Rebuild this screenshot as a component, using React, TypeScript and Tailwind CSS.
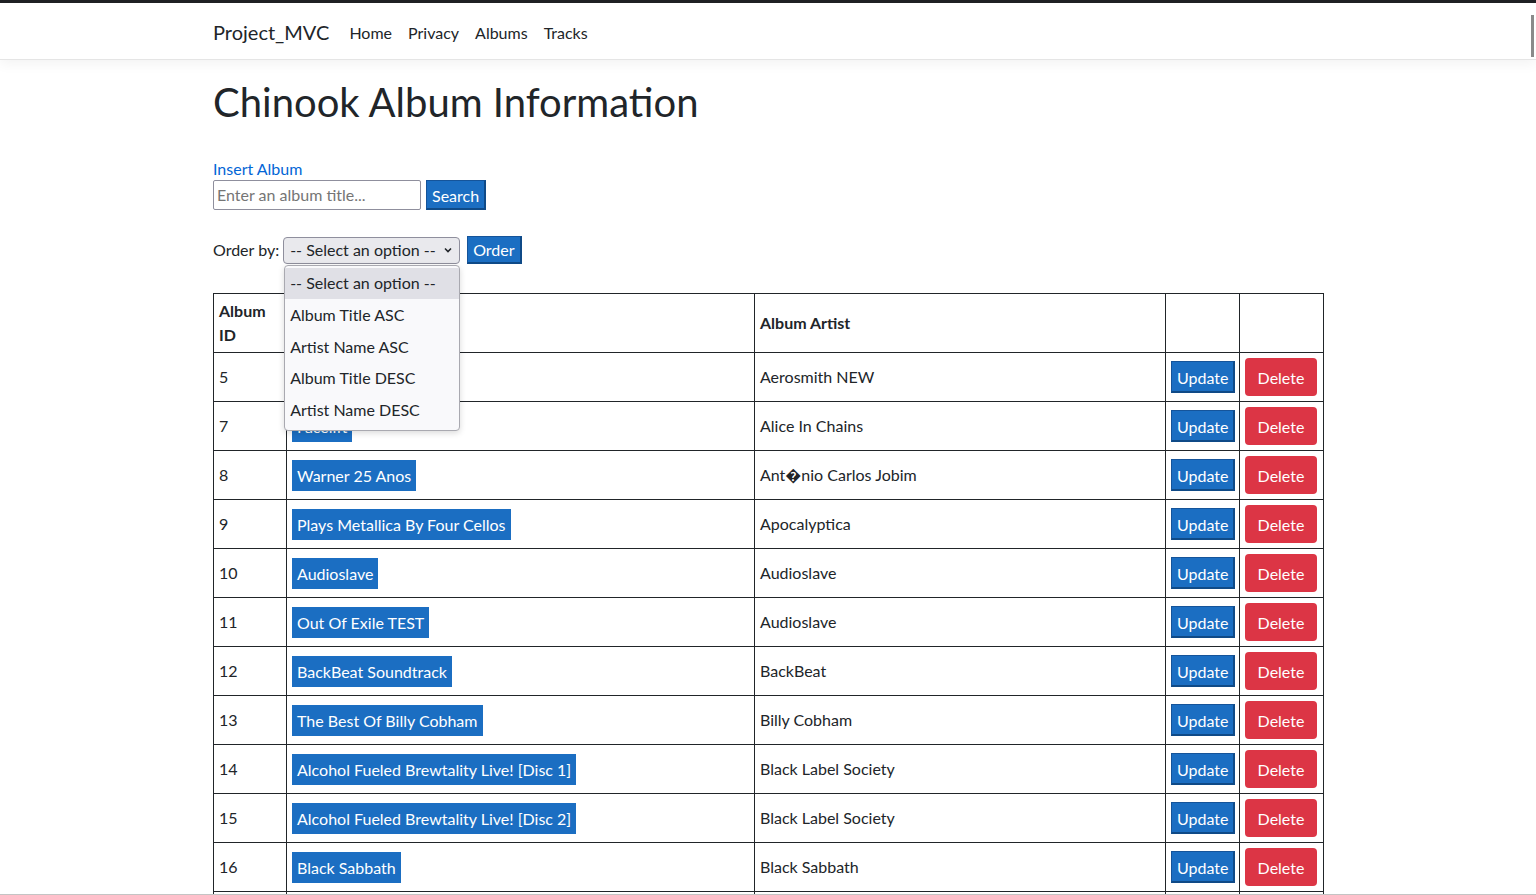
const albums = [
  { id: 5, title: "Big Ones", artist: "Aerosmith NEW" },
  { id: 7, title: "Facelift", artist: "Alice In Chains" },
  { id: 8, title: "Warner 25 Anos", artist: "Ant\uFFFDnio Carlos Jobim" },
  { id: 9, title: "Plays Metallica By Four Cellos", artist: "Apocalyptica" },
  { id: 10, title: "Audioslave", artist: "Audioslave" },
  { id: 11, title: "Out Of Exile TEST", artist: "Audioslave" },
  { id: 12, title: "BackBeat Soundtrack", artist: "BackBeat" },
  { id: 13, title: "The Best Of Billy Cobham", artist: "Billy Cobham" },
  { id: 14, title: "Alcohol Fueled Brewtality Live! [Disc 1]", artist: "Black Label Society" },
  { id: 15, title: "Alcohol Fueled Brewtality Live! [Disc 2]", artist: "Black Label Society" },
  { id: 16, title: "Black Sabbath", artist: "Black Sabbath" },
  { id: 17, title: "Black Sabbath Vol. 4 (Remaster)", artist: "Black Sabbath" },
];

const options = ["-- Select an option --", "Album Title ASC", "Artist Name ASC", "Album Title DESC", "Artist Name DESC"];

const font = { fontFamily: 'Lato, "Noto Sans", "DejaVu Sans", sans-serif' };

function Navbar() {
  return (
    <nav className="bg-white border-b border-[#e5e5e5] shadow-[0_4px_12px_rgba(0,0,0,0.05)]">
      <div className="mx-auto w-[1110px] h-[56px] pt-[3px] flex items-center">
        <span className="text-[20px] text-[#212529] mr-[12px] -mt-[2px]">Project_MVC</span>
        <ul className="flex text-[16px] text-[#212529]">
          <li className="px-2">Home</li>
          <li className="px-2">Privacy</li>
          <li className="px-2">Albums</li>
          <li className="px-2">Tracks</li>
        </ul>
      </div>
    </nav>
  );
}

function OrderSelect() {
  return (
    <div className="relative">
      <div className="w-[177px] h-[27px] rounded-[4px] border border-[#8f8f9d] bg-[#e9e9ed] flex items-center justify-between pl-[6px] pr-[6px] text-[16px] text-[#212529]">
        <span>-- Select an option --</span>
        <svg width="10" height="10" viewBox="0 0 10 10" fill="none" stroke="#212529" strokeWidth="1.6">
          <path d="M2 3.5 L5 6.5 L8 3.5" />
        </svg>
      </div>
      {/* open dropdown list */}
      <div className="absolute left-[1px] top-[28px] z-10 w-[176px] rounded-[4px] border border-[#a9a9b0] bg-[#f9f9fb] shadow-[0_2px_6px_rgba(0,0,0,0.15)] pt-[2px] pb-[4px]">
        {options.map((o, i) => (
          <div
            key={o}
            className={`h-[31.7px] flex items-center pl-[5px] text-[16px] text-[#212529] ${i === 0 ? "bg-[#e0e0e6]" : ""}`}
          >
            {o}
          </div>
        ))}
      </div>
    </div>
  );
}

export default function App() {
  return (
    <div className="min-h-screen bg-white text-[#212529]" style={font}>
      <div className="h-[3px] bg-[#202124]" />
      <Navbar />

      <main className="mx-auto w-[1110px]">
        <h1 className="text-[40px] leading-[48px] mt-[18px] text-[#212529]">Chinook Album Information</h1>

        <div className="mt-[31px] h-[23px] leading-[24px] text-[16px] text-[#0366d6]">Insert Album</div>
        <div className="flex items-center gap-[5px]">
          <div className="w-[208px] h-[30px] border border-[#8f8f9d] rounded-[2px] flex items-center pl-[3px] text-[16px] text-[#757575]">
            Enter an album title...
          </div>
          <button className="h-[30px] px-[5px] pt-[2px] bg-[#1b6ec2] text-white text-[16px] border border-[#15549a] border-r-2 border-b-2 border-r-[#0f4a87] border-b-[#0f4a87]">
            Search
          </button>
        </div>

        <div className="mt-[26px] flex items-center gap-[4px] text-[16px]">
          <span>Order by:</span>
          <OrderSelect />
          <button className="ml-[3px] h-[28px] px-[5px] pt-[1px] bg-[#1b6ec2] text-white text-[16px] border border-[#15549a] border-r-2 border-b-2 border-r-[#0f4a87] border-b-[#0f4a87]">
            Order
          </button>
        </div>

        <table className="mt-[29px] w-[1110px] table-fixed border-collapse text-[16px] leading-[24px]">
          <colgroup>
            <col className="w-[73px]" />
            <col className="w-[468px]" />
            <col className="w-[411px]" />
            <col className="w-[74px]" />
            <col className="w-[84px]" />
          </colgroup>
          <thead>
            <tr className="h-[59px]">
              <th className="border border-[#212529] px-[5px] py-[5px] text-left font-bold align-middle">Album ID</th>
              <th className="border border-[#212529] px-[5px] py-[5px] text-left font-bold align-middle">Album Title</th>
              <th className="border border-[#212529] px-[5px] py-[5px] text-left font-bold align-middle">Album Artist</th>
              <th className="border border-[#212529]" />
              <th className="border border-[#212529]" />
            </tr>
          </thead>
          <tbody>
            {albums.map((a) => (
              <tr key={a.id} className="h-[49px]">
                <td className="border border-[#212529] px-[5px] align-middle">{a.id}</td>
                <td className="border border-[#212529] px-[5px] align-middle">
                  <span className="inline-block bg-[#1b6ec2] text-white px-[5px] py-[3px] leading-[25px]">{a.title}</span>
                </td>
                <td className="border border-[#212529] px-[5px] align-middle">{a.artist}</td>
                <td className="border border-[#212529] px-[5px] align-middle">
                  <button className="h-[32px] px-[5px] pt-[2px] bg-[#1b6ec2] text-white border border-[#15549a] border-r-2 border-b-2 border-r-[#0f4a87] border-b-[#0f4a87]">
                    Update
                  </button>
                </td>
                <td className="border border-[#212529] px-[5px] align-middle">
                  <button className="h-[38px] w-[72px] pt-[1px] rounded-[4px] bg-[#dc3545] text-white">Delete</button>
                </td>
              </tr>
            ))}
          </tbody>
        </table>
      </main>

      <div className="fixed right-[2px] top-[15px] w-[3px] h-[42px] bg-[#8a8a8a]" />
      <div className="fixed left-0 right-0 bottom-0 h-[1px] bg-[#c4c4c4]" />
    </div>
  );
}
